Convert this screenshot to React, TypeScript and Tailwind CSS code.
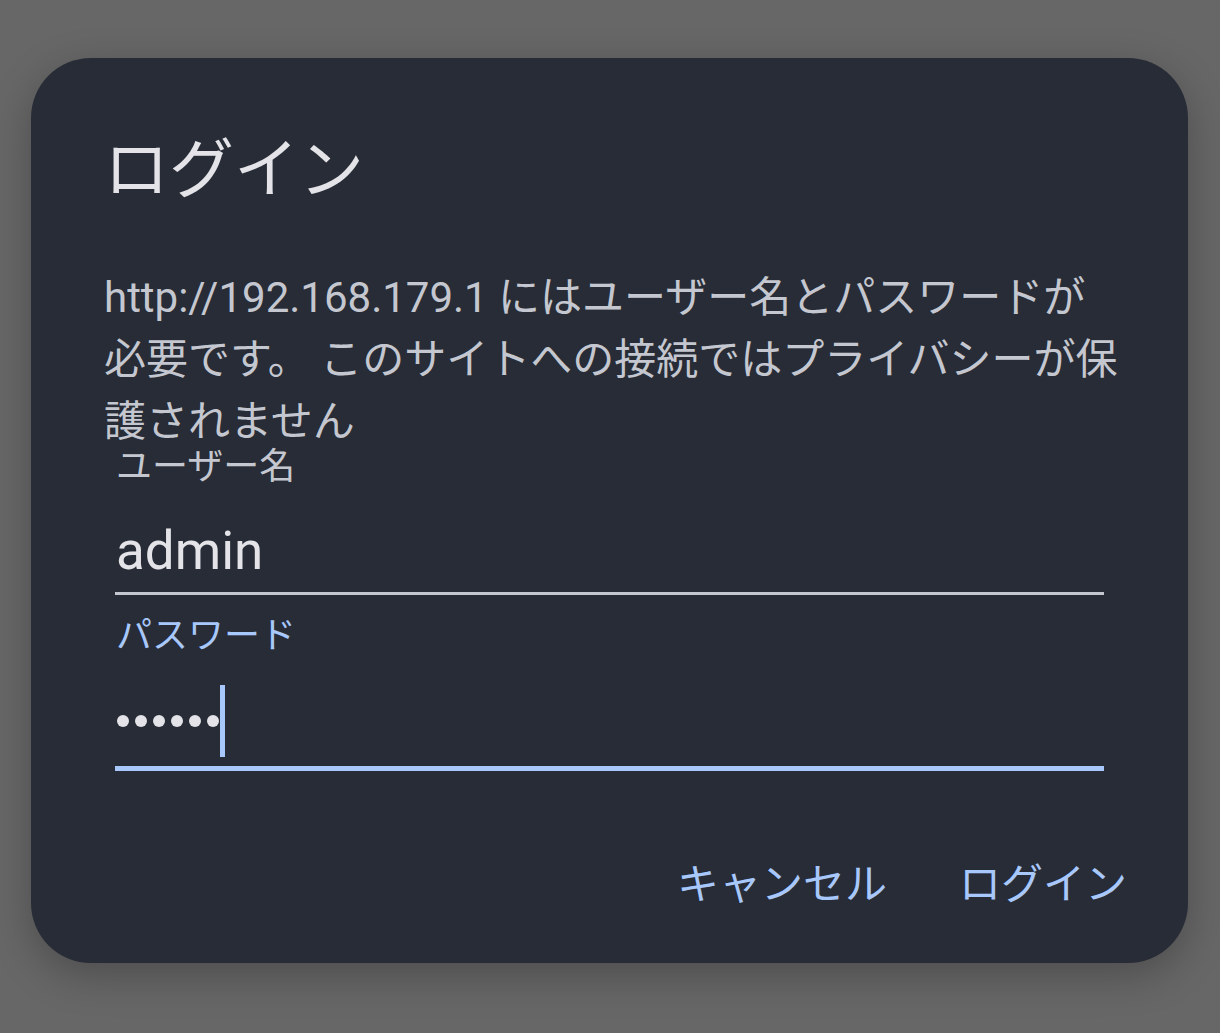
// Android-style HTTP auth dialog (dark theme)

const font = "font-['Roboto','Noto_Sans_CJK_JP',sans-serif]";

export default function App() {
    return (
        <div className={`min-h-screen w-full bg-[#676767] pt-[58px] pl-[31px] ${font}`}>

            {/* Dialog card */}
            <div className="w-[1157px] h-[905px] bg-[#272c36] rounded-[60px] shadow-[0_12px_40px_rgba(0,0,0,0.25)] flex flex-col">

                {/* Title */}
                <h1 className="pt-[78px] pl-[73px] text-[65px] leading-[68px] text-[#e3e3e8] font-normal">
                    ログイン
                </h1>

                {/* Message */}
                <p className="mt-[63px] pl-[73px] text-[42px] leading-[62px] text-[#c4c7cf] whitespace-nowrap">
                    http://192.168.179.1 にはユーザー名とパスワードが<br />
                    必要です。 このサイトへの接続ではプライバシーが保<br />
                    護されません
                </p>

                {/* Fields */}
                <div className="px-[84px] flex flex-col">

                    {/* User name */}
                    <div className="-mt-[6px] pl-[1px] text-[36px] leading-[40px] text-[#c4c7cf]">ユーザー名</div>
                    <div className="mt-[36px] pl-[1px] text-[53px] leading-[56px] text-[#e3e3e8]">admin</div>
                    <div className="mt-[13px] h-[3px] w-full bg-[#c4c7cf]"></div>

                    {/* Password */}
                    <div className="mt-[21px] pl-[1px] text-[36px] leading-[40px] text-[#a8c7fa]">パスワード</div>
                    <div className="mt-[29px] pl-[2px] h-[72px] flex flex-row items-center">
                        <div className="flex flex-row gap-[6px] items-center">
                            <div className="w-3 h-3 rounded-full bg-[#e3e3e8]"></div>
                            <div className="w-3 h-3 rounded-full bg-[#e3e3e8]"></div>
                            <div className="w-3 h-3 rounded-full bg-[#e3e3e8]"></div>
                            <div className="w-3 h-3 rounded-full bg-[#e3e3e8]"></div>
                            <div className="w-3 h-3 rounded-full bg-[#e3e3e8]"></div>
                            <div className="w-3 h-3 rounded-full bg-[#e3e3e8]"></div>
                        </div>
                        <div className="ml-[1px] w-[5px] h-[72px] bg-[#a8c7fa]"></div>
                    </div>
                    <div className="mt-[9px] h-[5px] w-full bg-[#a8c7fa]"></div>
                </div>

                {/* Actions */}
                <div className="mt-auto mb-[54px] pr-[61px] flex flex-row justify-end gap-[72px] text-[42px] leading-[48px] text-[#a8c7fa]">
                    <span>キャンセル</span>
                    <span>ログイン</span>
                </div>

            </div>
        </div>
    )
}
